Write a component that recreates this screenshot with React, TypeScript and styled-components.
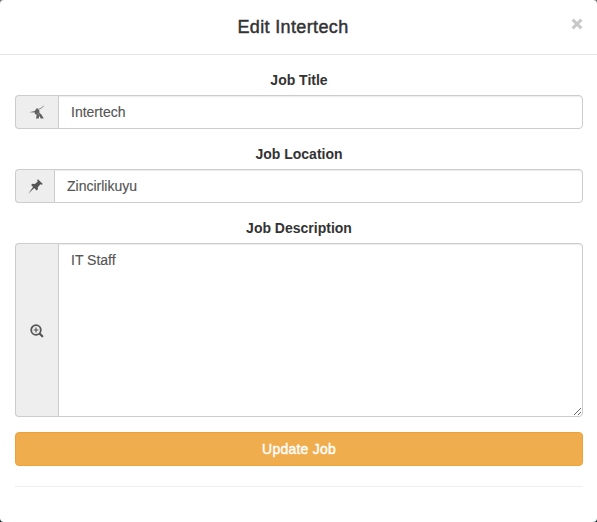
import React from 'react';
import styled, { createGlobalStyle } from 'styled-components';

const GlobalStyle = createGlobalStyle`
  *, *::before, *::after { box-sizing: border-box; }
  body {
    margin: 0;
    overflow: hidden;
    background: linear-gradient(#777, #122f33);
    color: #333;
    font: 14px/20px "Liberation Sans", Arial, sans-serif;
  }
`;

const Dialog = styled.div`
  width: 597px;
  height: 522px;
  background: #fff;
  border-radius: 4px;
`;

const Header = styled.header`
  display: grid;
  grid-template-columns: 15px 1fr 15px;
  align-items: center;
  height: 55px;
  padding: 0 14px;
  border-bottom: 1px solid #e5e5e5;
`;

const Title = styled.h4`
  grid-column: 2;
  margin: 0;
  padding-right: 11px;
  font-size: 18px;
  font-weight: 400;
  line-height: 26px;
  letter-spacing: 0.36px;
  text-align: center;
  -webkit-text-stroke: 0.45px #333;
`;

const Close = styled.button`
  display: flex;
  justify-content: center;
  padding: 0 0 6px 3px;
  border: 0;
  background: none;
`;

const Form = styled.form`
  display: flex;
  flex-direction: column;
  gap: 15px;
  padding: 15px 14px 0 15px;
`;

const Field = styled.div`
  display: flex;
  flex-direction: column;
  gap: 5px;
`;

const Label = styled.label`
  font-weight: 700;
  text-align: center;
`;

const InputGroup = styled.div<{ $height: number }>`
  display: flex;
  height: ${({ $height }) => $height}px;
`;

const Addon = styled.span<{ $width: number }>`
  display: flex;
  flex: none;
  align-items: center;
  justify-content: center;
  width: ${({ $width }) => $width}px;
  border: 1px solid #ccc;
  border-right: 0;
  border-radius: 4px 0 0 4px;
  background: #eee;
  color: #555;
`;

const Input = styled.input`
  flex: 1;
  min-width: 0;
  padding: 6px 12px;
  border: 1px solid #ccc;
  border-radius: 0 4px 4px 0;
  outline: 0;
  background: #fff;
  box-shadow: inset 0 1px 1px rgba(0, 0, 0, 0.075);
  color: #555;
  font: inherit;
  -webkit-text-stroke: 0.15px #555;
`;

const TextArea = styled(Input).attrs({ as: 'textarea' })`
  resize: vertical;
  height: 100%;
`;

const Submit = styled.button`
  height: 34px;
  padding: 6px 12px;
  border: 1px solid #eea236;
  border-radius: 4px;
  background: #f0ad4e;
  color: #fff;
  font: inherit;
  letter-spacing: 0.22px;
  -webkit-text-stroke: 0.4px #fff;
`;

const Divider = styled.hr`
  width: 100%;
  margin: 5px 0 0;
  border: 0;
  border-top: 1px solid #eee;
`;

const CloseIcon = () => (
  <svg width="12" height="12" viewBox="0 0 12 12" stroke="#c8c8c8" strokeWidth="3">
    <path d="M1.6 1.6 10.4 10.4M10.4 1.6 1.6 10.4" />
  </svg>
);

const FigureIcon = () => (
  <svg width="16" height="14" viewBox="0 0 16 14" fill="#606060">
    <path d="M.2 7.2 5.8 6 7.4 3.6 9.2 3.5 9.6 5 10.4 5.4 10.4 7.8 12.4 9.4 14.8 13.4H11.6L10.5 10.6 9.7 13.4H7L7.7 9.7 5.8 9 6 7.4Z" />
    <path d="M9.4 4.4 12.6 3 14.7 .7" fill="none" stroke="#777" strokeWidth=".8" />
    <path d="M8.6 8 9.8 9.6" stroke="#bbb" strokeWidth=".7" />
  </svg>
);

const PinIcon = () => (
  <svg width="15" height="15" viewBox="0 0 14 14" fill="#555">
    <path d="M9.3.2 13.8 4.7 12.8 5.4 11.6 5 9.2 7.6 9.3 9.5 8 10.7 5.8 8.5.2 13.8 4.7 7.4 2.9 5.6 4.1 4.4 6.4 4.7 9.1 2.3 8.5 1.1Z" />
  </svg>
);

const ZoomInIcon = () => (
  <svg width="14" height="15" viewBox="0 0 14 15" fill="none" stroke="#555">
    <circle cx="6" cy="7" r="4.8" strokeWidth="1.8" />
    <path d="M6 4.6V9.4M3.6 7H8.4" strokeWidth="1.2" />
    <path d="M9.8 10.8 12.3 13.3" strokeWidth="2.2" strokeLinecap="round" />
  </svg>
);

export default function App() {
  return (
    <>
      <GlobalStyle />
      <Dialog role="dialog" aria-labelledby="dialog-title">
        <Header>
          <Title id="dialog-title">Edit Intertech</Title>
          <Close type="button" aria-label="Close"><CloseIcon /></Close>
        </Header>
        <Form>
          <Field>
            <Label htmlFor="title">Job Title</Label>
            <InputGroup $height={34}>
              <Addon $width={43}><FigureIcon /></Addon>
              <Input id="title" defaultValue="Intertech" />
            </InputGroup>
          </Field>
          <Field>
            <Label htmlFor="location">Job Location</Label>
            <InputGroup $height={34}>
              <Addon $width={39}><PinIcon /></Addon>
              <Input id="location" defaultValue="Zincirlikuyu" />
            </InputGroup>
          </Field>
          <Field>
            <Label htmlFor="description">Job Description</Label>
            <InputGroup $height={174}>
              <Addon $width={43}><ZoomInIcon /></Addon>
              <TextArea id="description" defaultValue="IT Staff" />
            </InputGroup>
          </Field>
          <Submit type="button">Update Job</Submit>
          <Divider />
        </Form>
      </Dialog>
    </>
  );
}
